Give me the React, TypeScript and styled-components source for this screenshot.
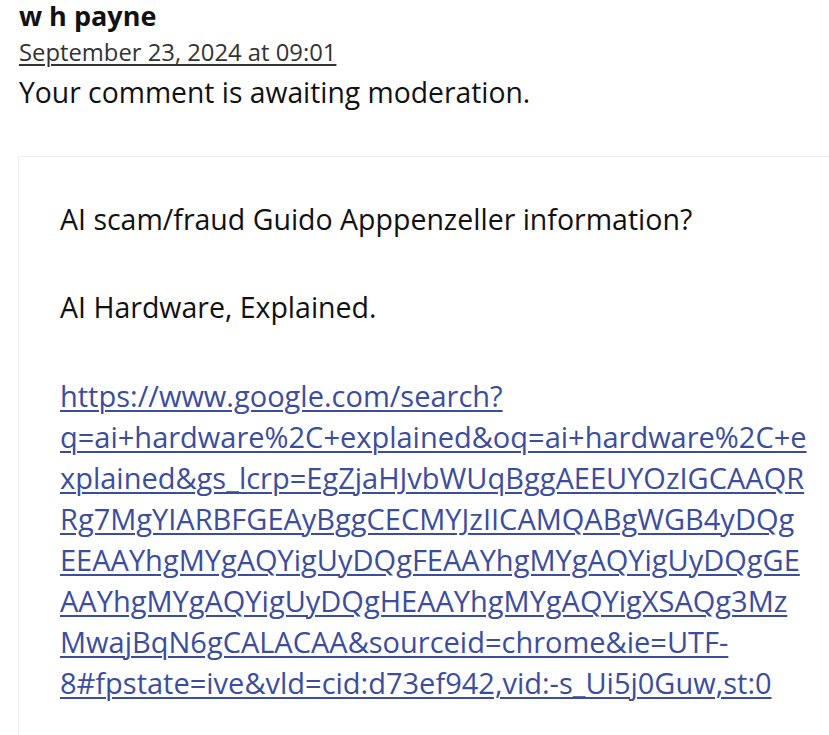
import React from 'react';
import styled, { createGlobalStyle } from 'styled-components';

const GlobalStyle = createGlobalStyle`
  html, body {
    margin: 0;
    padding: 0;
    background: #ffffff;
    overflow: hidden;
  }
  body {
    font-family: 'Open Sans', 'Noto Sans', sans-serif;
    color: #111111;
  }
`;

const Page = styled.div`
  width: 829px;
  overflow: hidden;
`;

const CommentMeta = styled.div`
  padding-left: 19px;
  display: flex;
  flex-direction: column;
`;

const Author = styled.b`
  font-size: 27px;
  line-height: 31px;
  font-weight: 700;
  color: #111111;
`;

const DateLink = styled.a`
  font-size: 23.8px;
  line-height: 42px;
  color: #333333;
  text-decoration: underline;
  text-decoration-thickness: 1.5px;
  text-underline-offset: 3px;
  width: fit-content;
`;

const Moderation = styled.p`
  margin: 0;
  font-size: 28.3px;
  line-height: 38px;
  color: #111111;
`;

const CommentBody = styled.div`
  margin: 45px 0 0 18px;
  width: 900px;
  border: 1px solid #eeeeee;
  border-right: none;
  padding: 42px 0 120px 41px;
  box-sizing: border-box;
`;

const Para = styled.p<{ $size?: number }>`
  margin: 0 0 47px;
  font-size: ${({ $size }) => $size ?? 28.5}px;
  line-height: 41px;
  color: #111111;
`;

const UrlLink = styled.a`
  color: #3c4d9e;
  text-decoration: underline;
  text-decoration-thickness: 1.5px;
  text-underline-offset: 3px;
`;

// the link wraps at these points in the original comment
const urlLines = [
  'https://www.google.com/search?',
  'q=ai+hardware%2C+explained&oq=ai+hardware%2C+e',
  'xplained&gs_lcrp=EgZjaHJvbWUqBggAEEUYOzIGCAAQR',
  'Rg7MgYIARBFGEAyBggCECMYJzIICAMQABgWGB4yDQg',
  'EEAAYhgMYgAQYigUyDQgFEAAYhgMYgAQYigUyDQgGE',
  'AAYhgMYgAQYigUyDQgHEAAYhgMYgAQYigXSAQg3Mz',
  'MwajBqN6gCALACAA&sourceid=chrome&ie=UTF-',
  '8#fpstate=ive&vld=cid:d73ef942,vid:-s_Ui5j0Guw,st:0',
];

export default function App() {
  return (
    <Page>
      <GlobalStyle />
      <CommentMeta>
        <Author>w h payne</Author>
        <DateLink href="#">September 23, 2024 at 09:01</DateLink>
        <Moderation>Your comment is awaiting moderation.</Moderation>
      </CommentMeta>
      <CommentBody>
        <Para>AI scam/fraud Guido Apppenzeller information?</Para>
        <Para>AI Hardware, Explained.</Para>
        <Para $size={29}>
          <UrlLink href="#">
            {urlLines.map((line, i) => (
              <React.Fragment key={i}>
                {i > 0 && <br />}
                {line}
              </React.Fragment>
            ))}
          </UrlLink>
        </Para>
      </CommentBody>
    </Page>
  );
}
